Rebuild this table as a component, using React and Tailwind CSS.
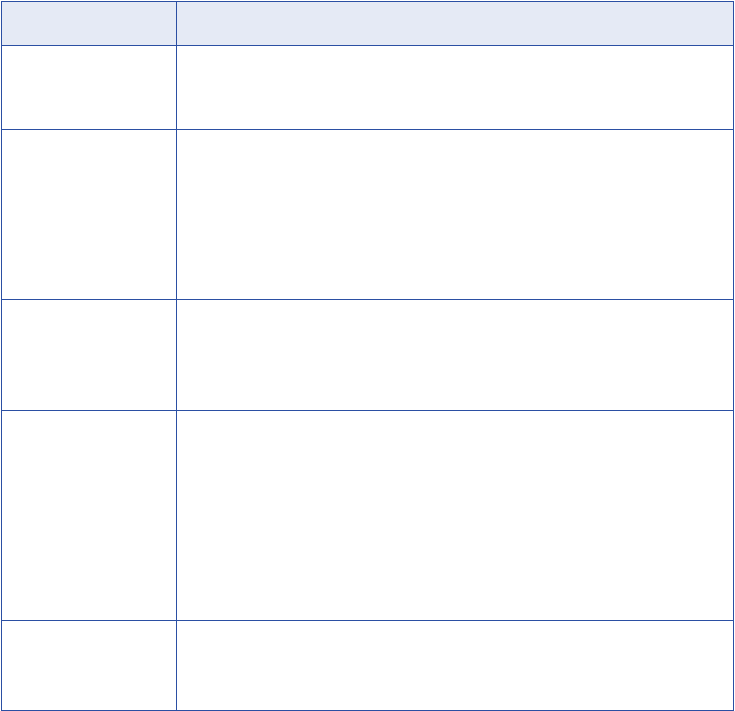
const rows = [83, 169, 110, 209, 89];

export default function App() {
    return (
        <div className="bg-white w-[735px] h-[711px] pl-px pt-px">
            <div className="w-[733px] border border-[#2b4fa3] flex flex-col">
                <div className="flex h-[44px] bg-[#e5eaf5] border-b border-[#2b4fa3]">
                    <div className="w-[175px] border-r border-[#2b4fa3]"></div>
                    <div className="flex-1"></div>
                </div>
                {rows.map((h, i) => (
                    <div
                        key={i}
                        className={`flex ${i < rows.length - 1 ? 'border-b border-[#2b4fa3]' : ''}`}
                        style={{ height: h + (i < rows.length - 1 ? 1 : 0) }}
                    >
                        <div className="w-[175px] border-r border-[#2b4fa3]"></div>
                        <div className="flex-1"></div>
                    </div>
                ))}
            </div>
        </div>
    );
}
